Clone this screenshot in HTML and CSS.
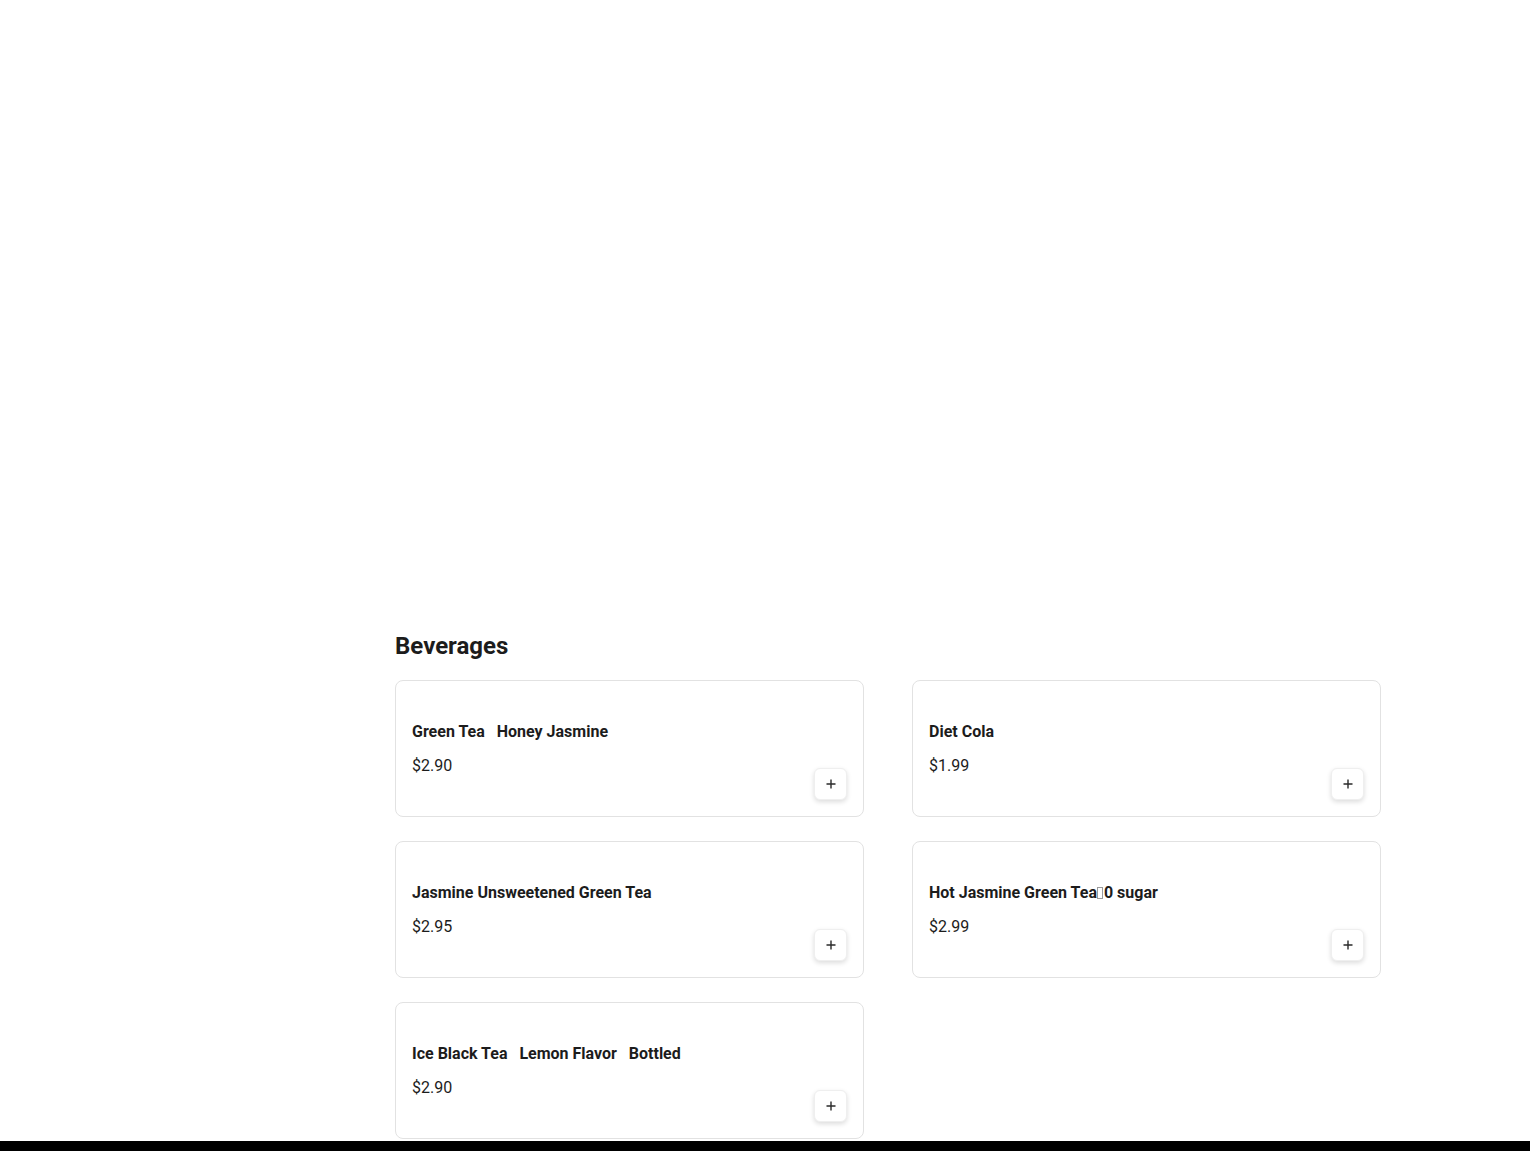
FILE: index.html
```html
<!DOCTYPE html>
<html lang="en">
<head>
    <meta charset="UTF-8">
    <meta name="viewport" content="width=device-width, initial-scale=1.0">
    <title>Menu - Beverages</title>
    <link rel="stylesheet" href="styles.css">
</head>
<body>
    <div class="page">
        
        <div class="banner"></div>

        <section class="category">
            <h2 class="category-title">Beverages</h2>

            <div class="item-grid">
                <div class="item-card">
                    <div class="item-info">
                        <div class="item-name">Green Tea&nbsp; &nbsp;Honey Jasmine</div>
                        <div class="item-price">$2.90</div>
                    </div>
                    <button class="add-btn" aria-label="Add"><svg viewBox="0 0 12 12"><path d="M6 1.5v9M1.5 6h9"/></svg></button>
                </div>

                <div class="item-card">
                    <div class="item-info">
                        <div class="item-name">Diet Cola</div>
                        <div class="item-price">$1.99</div>
                    </div>
                    <button class="add-btn" aria-label="Add"><svg viewBox="0 0 12 12"><path d="M6 1.5v9M1.5 6h9"/></svg></button>
                </div>

                <div class="item-card">
                    <div class="item-info">
                        <div class="item-name">Jasmine Unsweetened Green Tea</div>
                        <div class="item-price">$2.95</div>
                    </div>
                    <button class="add-btn" aria-label="Add"><svg viewBox="0 0 12 12"><path d="M6 1.5v9M1.5 6h9"/></svg></button>
                </div>

                <div class="item-card">
                    <div class="item-info">
                        <div class="item-name">Hot Jasmine Green Tea<span class="missing-glyph"></span>0 sugar</div>
                        <div class="item-price">$2.99</div>
                    </div>
                    <button class="add-btn" aria-label="Add"><svg viewBox="0 0 12 12"><path d="M6 1.5v9M1.5 6h9"/></svg></button>
                </div>

                <div class="item-card">
                    <div class="item-info">
                        <div class="item-name">Ice Black Tea&nbsp; &nbsp;Lemon Flavor&nbsp; &nbsp;Bottled</div>
                        <div class="item-price">$2.90</div>
                    </div>
                    <button class="add-btn" aria-label="Add"><svg viewBox="0 0 12 12"><path d="M6 1.5v9M1.5 6h9"/></svg></button>
                </div>
            </div>
        </section>
    </div>

    <div class="bottom-bar"></div>
</body>
</html>
```

FILE: styles.css
```css
body, html {
    margin: 0;
    padding: 0;
}

body {
    font-family: 'Roboto', 'Liberation Sans', sans-serif;
    color: #1c1c1c;
    background: #fff;
}

.page {
    padding-left: 395px;
    width: 986px;
}

.banner {
    height: 620px;
}

.category-title {
    font-size: 24px;
    font-weight: 700;
    line-height: 32px;
    margin: 10px 0 18px;
    color: #1c1c1c;
}

.item-grid {
    display: grid;
    grid-template-columns: 1fr 1fr;
    column-gap: 48px;
    row-gap: 24px;
}

.item-card {
    box-sizing: border-box;
    height: 137px;
    display: flex;
    justify-content: space-between;
    align-items: flex-end;
    padding: 16px;
    border: 1px solid #e2e2e2;
    border-radius: 8px;
    background: #fff;
}

.item-info {
    align-self: flex-start;
    padding-top: 23px;
}

.item-name {
    font-size: 16px;
    font-weight: 700;
    line-height: 24px;
    white-space: pre;
}

.missing-glyph {
    display: inline-block;
    width: 6px;
    height: 12px;
    border: 1px solid #9a9a9a;
    margin: 0 1px -1px 0;
    box-sizing: border-box;
}

.item-price {
    font-size: 16px;
    line-height: 24px;
    margin-top: 10px;
}

.add-btn {
    display: flex;
    align-items: center;
    justify-content: center;
    width: 33px;
    height: 32px;
    padding: 0;
    border: 1px solid #efefef;
    border-radius: 6px;
    background: #fff;
    box-shadow: 0 2px 5px rgba(0, 0, 0, 0.14);
    cursor: pointer;
}

.add-btn svg {
    width: 12px;
    height: 12px;
    fill: none;
    stroke: #2a2a2a;
    stroke-width: 1.4;
}

.bottom-bar {
    position: fixed;
    left: 0;
    right: 0;
    bottom: 0;
    height: 10px;
    background: #000;
}
```
